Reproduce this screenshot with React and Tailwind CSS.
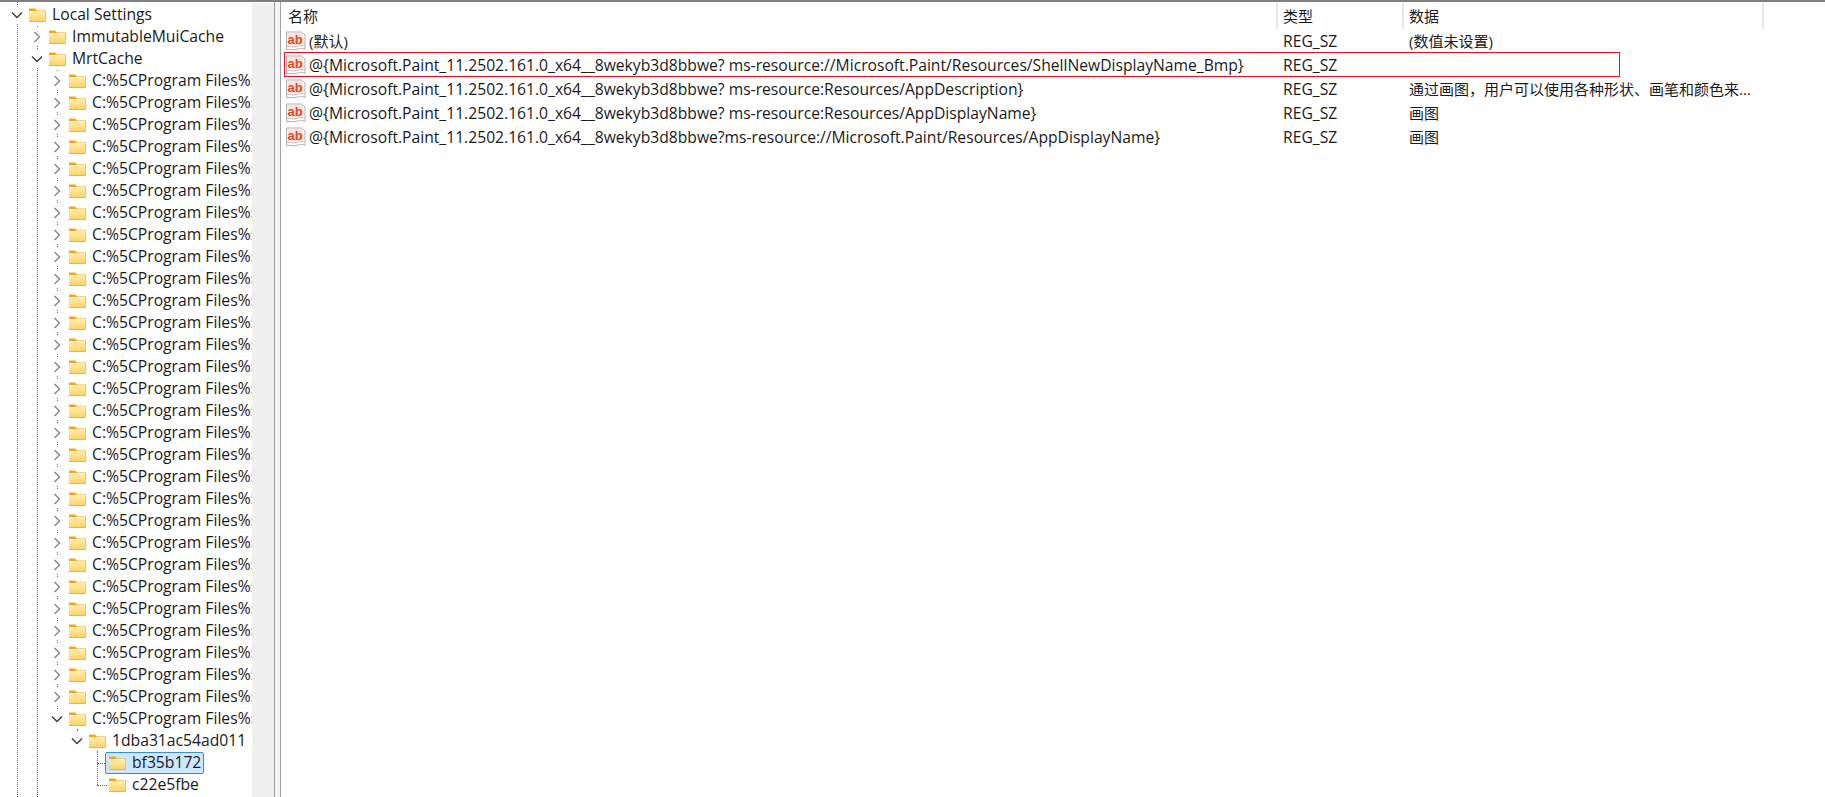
import React from 'react';

const fontClass = "font-['Open_Sans','Noto_Sans_CJK_SC',sans-serif]";

const indentClasses = ['pl-[9px]', 'pl-[29px]', 'pl-[49px]', 'pl-[69px]', 'pl-[89px]'];

const Chevron = ({ open }) => (
  <svg width="16" height="16" viewBox="0 0 16 16" fill="none" className="block">
    {open ? (
      <polyline points="3,5.5 8,10.5 13,5.5" stroke="#3c3c3c" strokeWidth="1.5" />
    ) : (
      <polyline points="5.5,3 10.5,8 5.5,13" stroke="#8c8c8c" strokeWidth="1.5" />
    )}
  </svg>
);

const Folder = () => (
  <svg width="19" height="16" viewBox="0 0 19 16" className="block shrink-0">
    <defs>
      <linearGradient id="folderBody" x1="0" y1="0" x2="0" y2="1">
        <stop offset="0" stopColor="#ffedb3" />
        <stop offset="1" stopColor="#fdd25e" />
      </linearGradient>
    </defs>
    <path d="M1 1.500h6l2 2h9v1H1z" fill="#f0a51c" />
    <rect x="1" y="4" width="17" height="11" fill="url(#folderBody)" />
    <rect x="1" y="14" width="17" height="1" fill="#eeb13c" />
    <rect x="17" y="4" width="1" height="11" fill="#f4c35c" />
  </svg>
);

const RegIcon = () => (
  <svg width="20" height="20" viewBox="0 0 20 20" className="block shrink-0">
    <path d="M.5 1h15l3.500 3v14.500c-3-2-5.500-1-9 0c-3 1-6-.5-9.500 0z" fill="#fbfbfb" stroke="#b0b0b0" />
    <path d="M1 15.500c3-.5 6 1 9 0c3-1 5.500-1.500 8.500-.5" fill="none" stroke="#c4c4c4" />
    <rect x="1.500" y="2" width="15.500" height="12" fill="#fce3da" />
    <text x="9.200" y="12.500" textAnchor="middle" fontFamily="'Liberation Sans',sans-serif" fontWeight="700" fontSize="13" fill="#e4481f">ab</text>
  </svg>
);

const TreeRow = ({ level, label, open, leaf, selected }) => (
  <div className={`relative z-10 flex h-[22px] items-center ${indentClasses[level]}`}>
    {leaf ? (
      <span className="h-[18px] w-4 shrink-0" />
    ) : (
      <span className="flex h-[18px] w-4 shrink-0 items-center justify-center bg-white">
        <Chevron open={open} />
      </span>
    )}
    <div
      className={`flex h-[22px] items-center ${
        selected ? 'rounded-[2px] border border-[#3a8fd4] bg-[#cce8ff] pl-[2px] pr-[2px]' : 'pl-[3px] pr-[4px]'
      }`}
    >
      <Folder />
      <span className="relative -top-px ml-[5px] whitespace-nowrap text-[#1a1a1a]">{label}</span>
    </div>
  </div>
);

const programRows = Array.from({ length: 29 }, (_, i) => i);

const regRows = [
  { name: '(默认)', type: 'REG_SZ', data: '(数值未设置)' },
  { name: '@{Microsoft.Paint_11.2502.161.0_x64__8wekyb3d8bbwe? ms-resource://Microsoft.Paint/Resources/ShellNewDisplayName_Bmp}', type: 'REG_SZ', data: '' },
  { name: '@{Microsoft.Paint_11.2502.161.0_x64__8wekyb3d8bbwe? ms-resource:Resources/AppDescription}', type: 'REG_SZ', data: '通过画图，用户可以使用各种形状、画笔和颜色来...' },
  { name: '@{Microsoft.Paint_11.2502.161.0_x64__8wekyb3d8bbwe? ms-resource:Resources/AppDisplayName}', type: 'REG_SZ', data: '画图' },
  { name: '@{Microsoft.Paint_11.2502.161.0_x64__8wekyb3d8bbwe?ms-resource://Microsoft.Paint/Resources/AppDisplayName}', type: 'REG_SZ', data: '画图' },
];

export default function App() {
  return (
    <div className={`flex h-screen w-full flex-col overflow-hidden bg-white text-[15px] leading-[22px] ${fontClass}`}>
      <div className="h-[2px] shrink-0 bg-[#808080]" />
      <div className="flex min-h-0 flex-1">
        <div className="relative w-[252px] shrink-0 overflow-hidden pt-[2px] text-[15.7px]">
          <span className="absolute bottom-0 left-[17px] top-0 border-l border-dotted border-[#6a6a6a]" />
          <span className="absolute bottom-0 left-[37px] top-[24px] border-l border-dotted border-[#6a6a6a]" />
          <span className="absolute left-[57px] top-[68px] h-[649px] border-l border-dotted border-[#6a6a6a]" />
          <span className="absolute left-[77px] top-[727px] h-[12px] border-l border-dotted border-[#6a6a6a]" />
          <span className="absolute left-[97px] top-[749px] h-[34px] border-l border-dotted border-[#6a6a6a]" />
          <span className="absolute left-[97px] top-[761px] w-[10px] border-t border-dotted border-[#6a6a6a]" />
          <span className="absolute left-[97px] top-[783px] w-[10px] border-t border-dotted border-[#6a6a6a]" />
          <TreeRow level={0} label="Local Settings" open />
          <TreeRow level={1} label="ImmutableMuiCache" />
          <TreeRow level={1} label="MrtCache" open />
          {programRows.map((i) => (
            <TreeRow key={i} level={2} label="C:%5CProgram Files%5C" />
          ))}
          <TreeRow level={2} label="C:%5CProgram Files%5C" open />
          <TreeRow level={3} label="1dba31ac54ad011" open />
          <TreeRow level={4} label="bf35b172" leaf selected />
          <TreeRow level={4} label="c22e5fbe" leaf />
        </div>
        <div className="mt-px w-[22px] shrink-0 bg-[#f0f0f0]" />
        <div className="w-[7px] shrink-0 border-x border-[#a0a0a0] bg-[#f5f5f5]" />
        <div className="relative min-w-0 flex-1 pt-px text-[#1a1a1a]">
          <div className="flex h-[26px] items-center">
            <div className="flex h-full w-[997px] items-center border-r-2 border-[#e5e5e5] pl-[7px]">名称</div>
            <div className="flex h-full w-[126px] items-center border-r-2 border-[#e5e5e5] pl-[5px]">类型</div>
            <div className="flex h-full w-[360px] items-center border-r-2 border-[#e5e5e5] pl-[5px]">数据</div>
          </div>
          {regRows.map((row) => (
            <div key={row.name} className="flex h-[24px] items-center">
              <div className="flex w-[997px] items-center pl-[5px]">
                <RegIcon />
                <span className={`ml-[3px] whitespace-nowrap ${row.name.startsWith('@') ? 'text-[15.67px]' : ''}`}>{row.name}</span>
              </div>
              <div className="w-[126px] pl-[5px] text-[15.7px]">{row.type}</div>
              <div className="whitespace-nowrap pl-[5px]">{row.data}</div>
            </div>
          ))}
          <div className="absolute left-[3px] top-[50px] h-[25px] w-[1336px] border border-[#e81123]" />
        </div>
      </div>
    </div>
  );
}
